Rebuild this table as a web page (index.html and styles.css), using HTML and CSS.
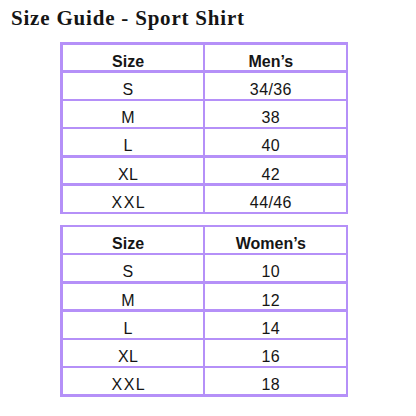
FILE: index.html
```html
<!DOCTYPE html>
<html>
<head>
<meta charset="utf-8">
<link rel="stylesheet" href="styles.css">
</head>
<body>
<h1 class="title">Size Guide - Sport Shirt</h1>
<div class="chart">
  <div class="cell head">Size</div><div class="cell head">Men’s</div>
  <div class="cell">S</div><div class="cell">34/36</div>
  <div class="cell">M</div><div class="cell">38</div>
  <div class="cell">L</div><div class="cell">40</div>
  <div class="cell">XL</div><div class="cell">42</div>
  <div class="cell wide">XXL</div><div class="cell">44/46</div>
</div>
<div class="chart">
  <div class="cell head">Size</div><div class="cell head">Women’s</div>
  <div class="cell">S</div><div class="cell">10</div>
  <div class="cell">M</div><div class="cell">12</div>
  <div class="cell">L</div><div class="cell">14</div>
  <div class="cell">XL</div><div class="cell">16</div>
  <div class="cell wide">XXL</div><div class="cell">18</div>
</div>
</body>
</html>
```
FILE: styles.css
```css
html, body {
  margin: 0;
  padding: 0;
  background: #ffffff;
}
body {
  width: 416px;
  height: 416px;
  overflow: hidden;
}
.title {
  margin: 6px 0 0 11px;
  font-family: "Liberation Serif", serif;
  font-weight: bold;
  font-size: 21px;
  letter-spacing: 0.8px;
  line-height: 24px;
  color: #151515;
}
.chart {
  display: grid;
  grid-template-columns: 140.25px 140.25px;
  grid-auto-rows: 25.75px;
  gap: 2.5px;
  padding: 2.5px;
  width: max-content;
  background: #b590f8;
  margin: 12px 0 0 60px;
}
.chart + .chart {
  margin-top: 10.5px;
}
.cell {
  background: #ffffff;
  font-family: "Liberation Sans", Arial, sans-serif;
  font-size: 16px;
  letter-spacing: 0.4px;
  color: #151515;
  text-align: center;
  line-height: 25.75px;
  padding-top: 4px;
  padding-right: 9px;
  box-sizing: border-box;
}
.head {
  font-weight: bold;
  letter-spacing: 0;
}
.wide {
  letter-spacing: 1.4px;
  text-indent: 1.4px;
}
```
